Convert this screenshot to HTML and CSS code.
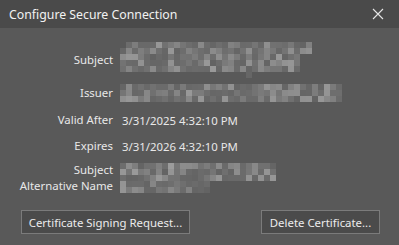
FILE: index.html
```html
<!DOCTYPE html>
<html>
<head>
<meta charset="utf-8">
<link rel="stylesheet" href="styles.css">
</head>
<body>
<div class="window">
  <div class="titlebar">
    <span class="title">Configure Secure Connection</span>
    <svg class="close" width="12" height="12" viewBox="0 0 12 12"><path d="M1 1L11 11M11 1L1 11" stroke="#e6e6e6" stroke-width="1.1" fill="none"/></svg>
  </div>
  <div class="content">
    <div class="row row-subject">
      <div class="label">Subject</div>
      <div class="mosaic" data-rows="31,32,30,30,30,1" data-offs="1,0,0,0,0,21" data-seed="7"></div>
    </div>
    <div class="row row-issuer">
      <div class="label">Issuer</div>
      <div class="mosaic" data-rows="37,37,37" data-offs="0,0,0" data-seed="19"></div>
    </div>
    <div class="row row-text row-valid">
      <div class="label">Valid After</div>
      <div class="value">3/31/2025 4:32:10 PM</div>
    </div>
    <div class="row row-text row-exp">
      <div class="label">Expires</div>
      <div class="value">3/31/2026 4:32:10 PM</div>
    </div>
    <div class="row row-alt">
      <div class="label">Subject<br>Alternative Name</div>
      <div class="mosaic" data-rows="26,26,26,15,15" data-offs="0,0,0,0,0" data-seed="41"></div>
    </div>
    <div class="buttons">
      <button class="btn btn-csr">Certificate Signing Request...</button>
      <button class="btn btn-del">Delete Certificate...</button>
    </div>
  </div>
</div>
<script src="script.js"></script>
</body>
</html>
```
FILE: styles.css
```css
html, body {
  margin: 0;
  padding: 0;
  background: #595959;
}
.window {
  width: 399px;
  height: 245px;
  background: #595959;
  font-family: "Noto Sans", "Open Sans", sans-serif;
  font-size: 11.4px;
  color: #e8e8e8;
  overflow: hidden;
}
.titlebar {
  height: 28px;
  background: #4a4a4a;
  display: flex;
  align-items: center;
  justify-content: space-between;
  padding: 0 15px 0 9px;
}
.title {
  font-size: 11.3px;
  color: #f2f2f2;
  font-size: 12.3px;
}
.close {
  display: block;
}
.content {
  padding-top: 14px;
  display: flex;
  flex-direction: column;
}
.row {
  display: grid;
  grid-template-columns: 113px 1fr;
  column-gap: 8px;
  align-items: center;
}
.label {
  text-align: right;
  line-height: 16px;
  white-space: nowrap;
}
.row-subject { height: 36px; }
.row-issuer { height: 18px; margin-top: 6px; }
.row-text { height: 20px; }
.row-valid { margin-top: 8px; }
.row-exp { margin-top: 6px; }
.row-alt { height: 30px; margin-top: 6px; }
.value {
  padding-left: 1px;
}
.mosaic {
  display: flex;
  flex-direction: column;
  margin-left: -1px;
}
.mrow {
  display: flex;
  height: 6px;
}
.mcell {
  width: 6px;
  height: 6px;
  flex: none;
}
.buttons {
  display: flex;
  justify-content: space-between;
  margin-top: 18px;
  padding: 0 19px 0 21px;
}
.btn {
  height: 24px;
  background: #4b4b4b;
  border: 1px solid #7b7b7b;
  color: #ececec;
  font-family: "Noto Sans", "Open Sans", sans-serif;
  font-size: 11.4px;
  padding: 0;
  margin: 0;
}
.btn-csr { width: 169px; }
.btn-del { width: 119px; }
```
FILE: script.js
```js
(function () {
  function rng(seed) {
    var s = seed >>> 0;
    return function () {
      s = (s * 1664525 + 1013904223) >>> 0;
      return s / 4294967296;
    };
  }
  var ms = document.querySelectorAll('.mosaic');
  ms.forEach(function (m) {
    var rows = m.dataset.rows.split(',').map(Number);
    var offs = m.dataset.offs.split(',').map(Number);
    var r = rng(Number(m.dataset.seed));
    rows.forEach(function (n, i) {
      var row = document.createElement('div');
      row.className = 'mrow';
      row.style.paddingLeft = (offs[i] * 6) + 'px';
      for (var k = 0; k < n; k++) {
        var c = document.createElement('div');
        c.className = 'mcell';
        var t = r();
        var v = Math.round(0x62 + t * t * 0x34 + r() * 8);
        c.style.background = 'rgb(' + v + ',' + v + ',' + v + ')';
        row.appendChild(c);
      }
      m.appendChild(row);
    });
  });
})();
```
